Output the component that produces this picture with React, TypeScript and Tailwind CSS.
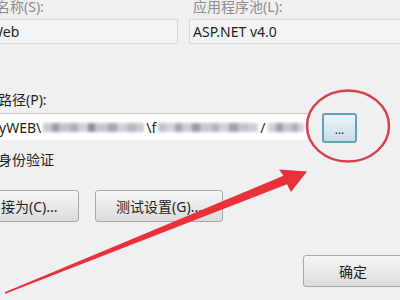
import React from "react";

const blur1 = [
  [9, "#c9c9d0"], [7, "#9c9ca6"], [11, "#c4c4cc"], [8, "#b0b0ba"], [10, "#d2d2d8"], [7, "#8e8e98"], [13, "#c6c6ce"], [9, "#a8a8b2"], [10, "#d0d0d6"], [9, "#b8b8c0"], [8, "#cacad0"],
] as const;
const blur2 = [
  [8, "#c2c2ca"], [9, "#d4d4da"], [7, "#a6a6b0"], [10, "#cdcdd3"], [8, "#9a9aa4"], [12, "#c8c8ce"], [7, "#b4b4bc"], [10, "#d2d2d8"], [9, "#a2a2ac"], [11, "#c4c4cc"], [9, "#cfcfd5"],
] as const;
const blur3 = [
  [8, "#d0d0d6"], [7, "#a0a0aa"], [9, "#c8c8d0"], [6, "#b0b0b8"], [6, "#d4d4da"],
] as const;

function Blur({ items }: { items: readonly (readonly [number, string])[] }) {
  return (
    <span className="flex h-[10px] items-center blur-[1.5px]">
      {items.map(([w, c], i) => (
        <span key={i} className="h-[9px]" style={{ width: w, background: c }} />
      ))}
    </span>
  );
}

export default function App() {
  return (
    <div className="relative h-[300px] w-[400px] overflow-hidden bg-[#f0f0f2] text-[14px] text-[#1e1e1e] [font-family:'Noto_Sans','Noto_Sans_CJK_SC',sans-serif]">
      <div className="-ml-[14px] grid grid-cols-[192px_1fr] gap-x-[11px] gap-y-[5px] pt-[0px]">
        <div className="h-[14px] pl-[10px] leading-[14px] text-[#8c8c8c]">名称(S):</div>
        <div className="h-[14px] pl-[4px] leading-[14px] text-[#8c8c8c]">应用程序池(L):</div>
        <div className="flex h-[25px] items-center border border-[#d6d6da] bg-[#f4f4f6] pl-[3px]">Web</div>
        <div className="-mr-[20px] flex h-[25px] items-center border border-[#d6d6da] bg-[#f4f4f6] pl-[3px]">ASP.NET v4.0</div>
      </div>

      <div className="mt-[49px] -ml-[2px] h-[14px] leading-[14px]">路径(P):</div>

      <div className="mt-[6px] flex items-start gap-[15px]">
        <div className="-ml-[3px] flex h-[27px] w-[310px] items-center gap-[2px] border-t border-[#c8c8cc] bg-white pl-[2px]">
          <span>yWEB\</span>
          <Blur items={blur1} />
          <span>\f</span>
          <Blur items={blur2} />
          <span>/</span>
          <Blur items={blur3} />
        </div>
        <button className="flex h-[30px] w-[35px] items-center justify-center rounded-[3px] border-2 border-[#62a2bb] bg-gradient-to-b from-[#eaf5fb] to-[#c9dde7] pt-[4px] text-[12px] leading-none text-[#333]">
          ...
        </button>
      </div>

      <div className="mt-[10px] -ml-[2px] h-[14px] leading-[14px]">身份验证</div>

      <div className="mt-[23px] flex gap-[16px]">
        <button className="-ml-[20px] flex h-[32px] w-[99px] items-center rounded-[3px] border border-[#a8a8ac] bg-gradient-to-b from-[#f6f6f6] to-[#dcdcde] pl-[20px]">
          接为(C)...
        </button>
        <button className="flex h-[32px] w-[128px] items-center justify-center rounded-[3px] border border-[#a8a8ac] bg-gradient-to-b from-[#f6f6f6] to-[#dcdcde]">
          测试设置(G)...
        </button>
      </div>

      <div className="mt-[33px] flex">
        <button className="ml-[303px] flex h-[32px] w-[100px] shrink-0 items-center justify-center rounded-[3px] border border-[#a8a8ac] bg-gradient-to-b from-[#f6f6f6] to-[#dcdcde]">
          确定
        </button>
      </div>

      <svg className="pointer-events-none absolute inset-0" width="400" height="300" viewBox="0 0 400 300">
        <ellipse cx="348" cy="126" rx="41" ry="35.5" fill="none" stroke="#d4434b" strokeWidth="2.5" />
        <polygon
          points="4.7,292.3 283.5,175.8 279,169.5 307,171.5 291,192 287,184.2 5.3,293.7"
          fill="#ea3038"
        />
      </svg>
    </div>
  );
}
